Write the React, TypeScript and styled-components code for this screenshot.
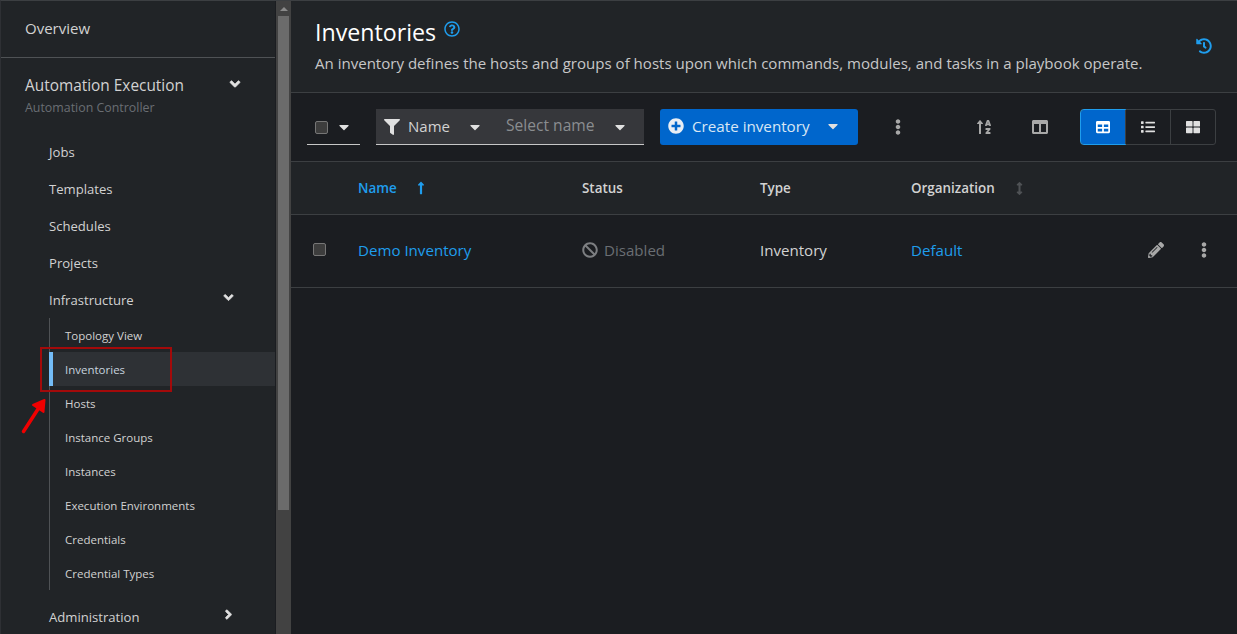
import React from "react";
import styled, { createGlobalStyle } from "styled-components";
import {
  FaAngleDown,
  FaAngleRight,
  FaArrowsAltV,
  FaBan,
  FaCaretDown,
  FaColumns,
  FaEllipsisV,
  FaFilter,
  FaHistory,
  FaList,
  FaLongArrowAltUp,
  FaPencilAlt,
  FaPlusCircle,
  FaRegQuestionCircle,
  FaSortAlphaUp,
  FaTable,
  FaThLarge,
} from "react-icons/fa";

const GlobalStyle = createGlobalStyle`
  html, body {
    margin: 0;
    height: 100%;
    background: #1b1d21;
    overflow: hidden;
  }
  #root { height: 100%; }
  * { box-sizing: border-box; }
`;

const Page = styled.div`
  position: relative;
  display: flex;
  width: 1237px;
  height: 634px;
  overflow: hidden;
  font-family: "Open Sans", "Noto Sans", sans-serif;
  border-top: 1px solid #3c3f42;
  border-left: 1px solid #2e3034;
  color: #e0e0e0;
`;

const Sidebar = styled.nav`
  width: 275px;
  flex-shrink: 0;
  background: #212427;
  border-right: 1px solid #1b1d21;
  overflow: hidden;
`;

const TopLink = styled.div`
  height: 57px;
  padding: 0 24px 2px;
  display: flex;
  align-items: center;
  font-size: 15px;
  color: #d2d2d2;
  border-bottom: 1px solid #4f5255;
`;

const Section = styled.div`
  padding: 15px 24px 0;
`;

const SectionHead = styled.div`
  display: flex;
  justify-content: space-between;
  align-items: center;
  height: 24px;
  padding-right: 8px;
  font-size: 15.4px;
  color: #d2d2d2;
  svg { font-size: 16px; color: #e0e0e0; margin-top: -3px; stroke: currentColor; stroke-width: 20; }
`;

const SectionSub = styled.div`
  margin-top: 1px;
  height: 20px;
  line-height: 20px;
  font-size: 12.4px;
  color: #6a6e73;
`;

const NavList = styled.div`
  margin-top: 15px;
`;

const NavItem = styled.div`
  display: flex;
  justify-content: space-between;
  align-items: center;
  height: 37px;
  padding: 0 39px 0 48px;
  font-size: 13.1px;
  color: #d2d2d2;
  svg { font-size: 15px; color: #e0e0e0; margin-top: -4px; stroke: currentColor; stroke-width: 20; }
`;

const SubList = styled.div`
  margin: 0 0 8px 48px;
  border-left: 1px solid #4f5255;
`;

const SubItem = styled.div<{ $active?: boolean }>`
  display: flex;
  align-items: center;
  height: 34px;
  font-size: 11.5px;
  color: ${(p) => (p.$active ? "#c7d3df" : "#d2d2d2")};
  background: ${(p) => (p.$active ? "#2e3135" : "transparent")};
  border-left: ${(p) => (p.$active ? "4px solid #73bcf7" : "none")};
  padding-left: ${(p) => (p.$active ? "12px" : "15px")};
  margin-left: ${(p) => (p.$active ? "-1px" : "0")};
`;

const Scrollbar = styled.div`
  width: 15px;
  flex-shrink: 0;
  background: #424242;
  display: flex;
  flex-direction: column;
  align-items: center;
`;

const ScrollArrow = styled.div`
  height: 15px;
  width: 100%;
  display: flex;
  justify-content: center;
  padding-top: 6px;
  &::before {
    content: "";
    border-left: 4px solid transparent;
    border-right: 4px solid transparent;
    border-bottom: 4px solid #8a8a8a;
    height: 0;
  }
`;

const ScrollThumb = styled.div`
  width: 11px;
  height: 494px;
  background: #6b6b6b;
`;

const Main = styled.main`
  flex: 1;
  min-width: 0;
  background: #1b1d21;
`;

const Header = styled.header`
  height: 92px;
  padding: 15px 24px 0;
  background: #212427;
  border-bottom: 1px solid #3c3f42;
  position: relative;
`;

const TitleRow = styled.div`
  display: flex;
  align-items: flex-start;
  gap: 8px;
`;

const Title = styled.h1`
  margin: 0;
  font-size: 23.2px;
  font-weight: 400;
  line-height: 32px;
  color: #fff;
`;

const HelpIcon = styled(FaRegQuestionCircle)`
  font-size: 16px;
  color: #1f9ded;
  margin-top: 5px;
`;

const Description = styled.p`
  margin: 4px 0 0;
  font-size: 15.05px;
  line-height: 22px;
  color: #c7c7c7;
`;

const HistoryIcon = styled(FaHistory)`
  position: absolute;
  right: 25px;
  top: 37px;
  font-size: 16px;
  color: #1f9ded;
`;

const Toolbar = styled.div`
  height: 69px;
  display: flex;
  align-items: center;
  padding: 0 21px 0 16px;
  border-bottom: 1px solid #3c3f42;
`;

const BulkSelect = styled.div`
  width: 53px;
  height: 36px;
  display: flex;
  align-items: center;
  gap: 8px;
  padding-left: 8px;
  border-bottom: 1px solid #c7c7c7;
  svg { font-size: 16px; color: #e0e0e0; }
`;

const Check = styled.span`
  display: block;
  width: 13px;
  height: 13px;
  background: #3d3d3d;
  border: 1px solid #767676;
  border-radius: 2px;
`;

const BulkCheck = styled(Check)`
  margin-top: 1px;
`;

const FilterBox = styled.div`
  width: 268px;
  height: 36px;
  margin-left: 16px;
  display: flex;
  align-items: center;
  background: #36373b;
  border-bottom: 1px solid #c7c7c7;
  padding: 0 16px 0 8px;
  font-size: 15px;
  color: #d2d2d2;
`;

const FilterIcon = styled(FaFilter)`
  font-size: 16px;
  color: #e0e0e0;
  margin-right: 8px;
`;

const FilterCaret = styled(FaCaretDown)`
  font-size: 16px;
  color: #e0e0e0;
`;

const FilterName = styled.span`
  width: 59px;
  margin-top: -2px;
`;

const FilterPlaceholder = styled.span`
  flex: 1;
  margin-left: 23px;
  margin-top: -3px;
  font-size: 15.6px;
  color: #8a8d90;
`;

const CreateButton = styled.div`
  width: 198px;
  height: 36px;
  margin-left: 16px;
  display: flex;
  align-items: center;
  padding: 0 17px 2px 8px;
  gap: 8px;
  background: #0066cc;
  border-radius: 3px;
  font-size: 15.2px;
  color: #d9e6f4;
`;

const CreateIcon = styled(FaPlusCircle)`
  font-size: 16px;
  color: #e8eef5;
`;

const CreateLabel = styled.span`
  flex: 1;
`;

const ToolIcon = styled.div<{ $width: number }>`
  width: ${(p) => p.$width}px;
  display: flex;
  justify-content: flex-end;
  color: #a8a8a8;
  svg { font-size: 16px; }
`;

const ViewToggle = styled.div`
  margin-left: 32px;
  display: flex;
  height: 36px;
  width: 136px;
  border: 1px solid #3c3f42;
  border-radius: 3px;
`;

const ViewButton = styled.div<{ $active?: boolean }>`
  flex: 1;
  display: flex;
  align-items: center;
  justify-content: center;
  color: ${(p) => (p.$active ? "#fff" : "#e0e0e0")};
  background: ${(p) => (p.$active ? "#0066cc" : "transparent")};
  outline: ${(p) => (p.$active ? "1px solid #1f9ded" : "none")};
  border-radius: ${(p) => (p.$active ? "3px 0 0 3px" : "0")};
  border-left: ${(p) => (p.$active ? "none" : "1px solid #3c3f42")};
  svg { font-size: 14px; }
`;

const Row = styled.div<{ $head?: boolean }>`
  display: grid;
  grid-template-columns: 67px 224px 178px 151px 160px 1fr;
  align-items: center;
  height: ${(p) => (p.$head ? "53px" : "73px")};
  background: ${(p) => (p.$head ? "#212427" : "#1b1d21")};
  border-bottom: 1px solid #3c3f42;
`;

const HeadCell = styled.div<{ $link?: boolean }>`
  display: flex;
  align-items: center;
  font-size: 13.4px;
  font-weight: 600;
  color: ${(p) => (p.$link ? "#1f9ded" : "#d2d2d2")};
`;

const SortUp = styled(FaLongArrowAltUp)`
  margin-left: 17px;
  font-size: 14px;
  color: #1f9ded;
`;

const SortNeutral = styled(FaArrowsAltV)`
  margin-left: 18px;
  font-size: 13px;
  color: #4f5255;
`;

const CheckCell = styled.div`
  padding-left: 22px;
  margin-top: -3px;
`;

const Cell = styled.div`
  font-size: 15.1px;
  color: #d2d2d2;
  margin-top: -3px;
`;

const LinkCell = styled(Cell)`
  color: #1f9ded;
`;

const StatusCell = styled(Cell)`
  display: flex;
  align-items: center;
  gap: 6px;
  color: #6a6e73;
  svg { font-size: 16px; color: #7d7f82; }
`;

const Actions = styled.div`
  display: flex;
  align-items: center;
  justify-content: flex-end;
  margin-top: -2px;
  padding-right: 25px;
  gap: 32px;
  color: #a8a8a8;
  svg { font-size: 16px; }
`;

const Highlight = styled.div`
  position: absolute;
  left: 39px;
  top: 346px;
  width: 132px;
  height: 45px;
  border: 2px solid #a30a0a;
  pointer-events: none;
`;

const Arrow = styled.svg`
  position: absolute;
  left: 17px;
  top: 394px;
  width: 30px;
  height: 40px;
`;

const subItems = [
  "Topology View",
  "Inventories",
  "Hosts",
  "Instance Groups",
  "Instances",
  "Execution Environments",
  "Credentials",
  "Credential Types",
];

export default function App() {
  return (
    <Page>
      <GlobalStyle />
      <Sidebar>
        <TopLink>Overview</TopLink>
        <Section>
          <SectionHead>
            Automation Execution
            <FaAngleDown />
          </SectionHead>
          <SectionSub>Automation Controller</SectionSub>
        </Section>
        <NavList>
          <NavItem>Jobs</NavItem>
          <NavItem>Templates</NavItem>
          <NavItem>Schedules</NavItem>
          <NavItem>Projects</NavItem>
          <NavItem>
            Infrastructure
            <FaAngleDown />
          </NavItem>
          <SubList>
            {subItems.map((s) => (
              <SubItem key={s} $active={s === "Inventories"}>
                {s}
              </SubItem>
            ))}
          </SubList>
          <NavItem>
            Administration
            <FaAngleRight />
          </NavItem>
        </NavList>
      </Sidebar>
      <Scrollbar>
        <ScrollArrow />
        <ScrollThumb />
      </Scrollbar>
      <Main>
        <Header>
          <TitleRow>
            <Title>Inventories</Title>
            <HelpIcon />
          </TitleRow>
          <Description>
            An inventory defines the hosts and groups of hosts upon which commands, modules, and tasks in a playbook operate.
          </Description>
          <HistoryIcon />
        </Header>
        <Toolbar>
          <BulkSelect>
            <BulkCheck />
            <FaCaretDown />
          </BulkSelect>
          <FilterBox>
            <FilterIcon />
            <FilterName>Name</FilterName>
            <FilterCaret />
            <FilterPlaceholder>Select name</FilterPlaceholder>
            <FilterCaret />
          </FilterBox>
          <CreateButton>
            <CreateIcon />
            <CreateLabel>Create inventory</CreateLabel>
            <FilterCaret />
          </CreateButton>
          <ToolIcon $width={48}>
            <FaEllipsisV />
          </ToolIcon>
          <ToolIcon $width={86}>
            <FaSortAlphaUp />
          </ToolIcon>
          <ToolIcon $width={56}>
            <FaColumns />
          </ToolIcon>
          <ViewToggle>
            <ViewButton $active>
              <FaTable />
            </ViewButton>
            <ViewButton>
              <FaList />
            </ViewButton>
            <ViewButton>
              <FaThLarge />
            </ViewButton>
          </ViewToggle>
        </Toolbar>
        <Row $head>
          <div />
          <HeadCell $link>
            Name
            <SortUp />
          </HeadCell>
          <HeadCell>Status</HeadCell>
          <HeadCell>Type</HeadCell>
          <HeadCell>
            Organization
            <SortNeutral />
          </HeadCell>
        </Row>
        <Row>
          <CheckCell>
            <Check />
          </CheckCell>
          <LinkCell>Demo Inventory</LinkCell>
          <StatusCell>
            <FaBan />
            Disabled
          </StatusCell>
          <Cell>Inventory</Cell>
          <LinkCell>Default</LinkCell>
          <Actions>
            <FaPencilAlt />
            <FaEllipsisV />
          </Actions>
        </Row>
      </Main>
      <Highlight />
      <Arrow viewBox="0 0 30 40">
        <path d="M5.5 36.5 L22 11" stroke="#f00000" strokeWidth="3.5" strokeLinecap="round" fill="none" />
        <path
          d="M15 10 L26.5 5 L25.5 17 Z"
          fill="#f00000"
          stroke="#f00000"
          strokeWidth="2"
          strokeLinejoin="round"
        />
      </Arrow>
    </Page>
  );
}
